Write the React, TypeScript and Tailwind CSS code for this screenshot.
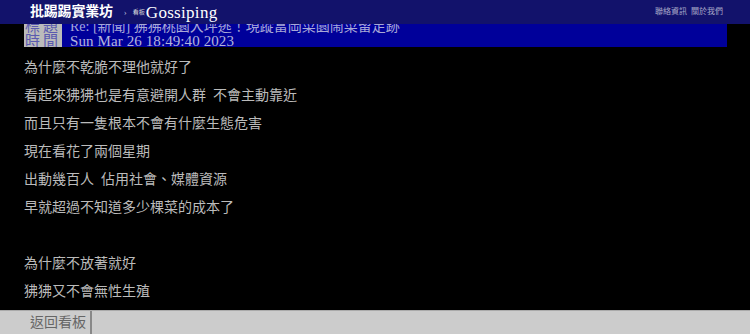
import React from 'react';

const lines = [
    '為什麼不乾脆不理他就好了',
    '看起來狒狒也是有意避開人群  不會主動靠近',
    '而且只有一隻根本不會有什麼生態危害',
    '現在看花了兩個星期',
    '出動幾百人  佔用社會、媒體資源',
    '早就超過不知道多少棵菜的成本了',
    '',
    '為什麼不放著就好',
    '狒狒又不會無性生殖',
];

const cjk = { fontFamily: '"Liberation Serif", "Noto Sans CJK TC", serif' };

const App = () => {
    return (
        <div className="h-[334px] w-[750px] flex flex-col bg-black overflow-hidden" style={cjk}>
            {/* top bar */}
            <div className="h-[24px] shrink-0 bg-[#12126b] flex items-center pl-[30px] pr-[27px] relative z-10">
                <span className="text-[14px] leading-none font-semibold text-white tracking-[-0.2px]">批踢踢實業坊</span>
                <span className="ml-[11px] text-[9px] leading-none text-[#bbbbdd]">›</span>
                <span className="ml-[6px] text-[6px] leading-none text-[#dddddd]">看板</span>
                <span className="ml-[1px] text-[17px] leading-none text-white tracking-[0.3px]">Gossiping</span>
                <div className="ml-auto flex gap-[4px] text-[8px] leading-none text-[#a9a9c8]">
                    <span>聯絡資訊</span>
                    <span>關於我們</span>
                </div>
            </div>

            {/* article meta, first row partly hidden under top bar */}
            <div className="h-[23px] shrink-0 overflow-hidden pl-[24px] pr-[23px]">
                <div className="-mt-[1px] flex flex-col">
                    <div className="h-[12px] flex">
                        <div className="w-[38px] shrink-0 bg-[#bbbbbb] text-[15px] leading-[7px] text-[#5a5ab0] pl-[1px] tracking-[3px] whitespace-nowrap">標題</div>
                        <div className="flex-1 bg-[#00009a] text-[14px] leading-[8px] text-[#a8a8d6] pl-[8px] whitespace-pre">Re: [新聞] 狒狒桃園大坪逃！現蹤富岡菜園鬧菜留足跡</div>
                    </div>
                    <div className="h-[12px] flex">
                        <div className="w-[38px] shrink-0 bg-[#bbbbbb] text-[15px] leading-[12px] text-[#5a5ab0] pl-[1px] tracking-[3px] whitespace-nowrap">時間</div>
                        <div className="flex-1 bg-[#00009a] text-[15px] leading-[12px] text-[#b4b4dc] pl-[8px] whitespace-pre tracking-[0.1px]">Sun Mar 26 18:49:40 2023</div>
                    </div>
                </div>
            </div>

            {/* content */}
            <div className="flex-1 overflow-hidden pl-[24px] pt-[7px] text-[14px] leading-[28px] text-[#bbbbbb]">
                {lines.map((l, i) => (
                    <div key={i} className="h-[28px] whitespace-pre">{l}</div>
                ))}
            </div>

            {/* bottom bar */}
            <div className="h-[24px] shrink-0 bg-[#cccccc] border-t border-[#aaaaaa] flex">
                <div className="w-[92px] border-r-2 border-[#888888] pl-[30px] text-[14px] leading-[23px] text-[#666666]">返回看板</div>
            </div>
        </div>
    );
};

export default App;
